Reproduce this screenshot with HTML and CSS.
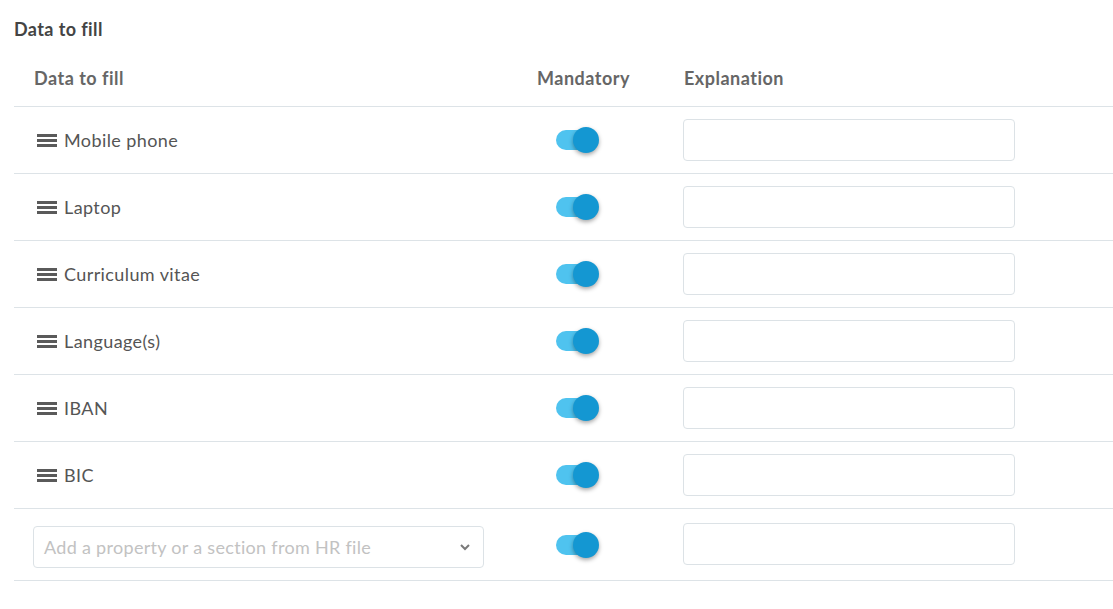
FILE: index.html
```html
<!DOCTYPE html>
<html>
<head>
<meta charset="utf-8">
<link rel="stylesheet" href="styles.css">
</head>
<body>
<div class="page">
  <h2 class="title">Data to fill</h2>
  <div class="table">
    <div class="row head">
      <div class="c1">Data to fill</div>
      <div class="c2">Mandatory</div>
      <div class="c3">Explanation</div>
    </div>
    <div class="row">
      <div class="c1"><span class="grip"><i></i><i></i><i></i></span>Mobile phone</div>
      <div class="c2"><span class="toggle"><span class="knob"></span></span></div>
      <div class="c3"><span class="input"></span></div>
    </div>
    <div class="row">
      <div class="c1"><span class="grip"><i></i><i></i><i></i></span>Laptop</div>
      <div class="c2"><span class="toggle"><span class="knob"></span></span></div>
      <div class="c3"><span class="input"></span></div>
    </div>
    <div class="row">
      <div class="c1"><span class="grip"><i></i><i></i><i></i></span>Curriculum vitae</div>
      <div class="c2"><span class="toggle"><span class="knob"></span></span></div>
      <div class="c3"><span class="input"></span></div>
    </div>
    <div class="row">
      <div class="c1"><span class="grip"><i></i><i></i><i></i></span>Language(s)</div>
      <div class="c2"><span class="toggle"><span class="knob"></span></span></div>
      <div class="c3"><span class="input"></span></div>
    </div>
    <div class="row">
      <div class="c1"><span class="grip"><i></i><i></i><i></i></span>IBAN</div>
      <div class="c2"><span class="toggle"><span class="knob"></span></span></div>
      <div class="c3"><span class="input"></span></div>
    </div>
    <div class="row">
      <div class="c1"><span class="grip"><i></i><i></i><i></i></span>BIC</div>
      <div class="c2"><span class="toggle"><span class="knob"></span></span></div>
      <div class="c3"><span class="input"></span></div>
    </div>
    <div class="row last">
      <div class="c1 sel-cell">
        <div class="select">
          <span class="placeholder">Add a property or a section from HR file</span>
          <svg class="chev" width="12" height="8" viewBox="0 0 12 8"><path d="M2 2l4 4 4-4" fill="none" stroke="#7a7a7a" stroke-width="2"/></svg>
        </div>
      </div>
      <div class="c2"><span class="toggle"><span class="knob"></span></span></div>
      <div class="c3"><span class="input"></span></div>
    </div>
  </div>
</div>
</body>
</html>
```
FILE: styles.css
```css
html, body {
  margin: 0;
  padding: 0;
  background: #fff;
}
body {
  font-family: Lato, "Liberation Sans", sans-serif;
  color: #555;
}
.page {
  padding: 17px 0 0 14px;
}
.title {
  margin: 0;
  font-size: 18px;
  line-height: 24px;
  font-weight: 700;
  letter-spacing: 0.4px;
  color: #444;
}
.table {
  margin-top: 9px;
}
.row {
  display: grid;
  grid-template-columns: 523px 146px 1fr;
  align-items: center;
  height: 66px;
  border-bottom: 1px solid #dde3e7;
  font-size: 18px;
  letter-spacing: 0.4px;
}
.row.head {
  height: 56px;
  font-size: 18px;
  font-weight: 700;
  letter-spacing: 0.5px;
  color: #666;
}
.row.last {
  height: 71px;
}
.c1 {
  padding-left: 20px;
  display: flex;
  align-items: center;
}
.head .c3 {
  padding-left: 1px;
}
.grip {
  display: inline-flex;
  flex-direction: column;
  gap: 2px;
  width: 20px;
  margin-left: 3px;
  margin-right: 7px;
}
.grip i {
  display: block;
  height: 3px;
  background: #5a5a5a;
}
.toggle {
  display: block;
  position: relative;
  margin-left: 19px;
  width: 36px;
  height: 20px;
  border-radius: 10px;
  background: #4fc3ef;
}
.knob {
  position: absolute;
  left: 17px;
  top: -3px;
  width: 26px;
  height: 26px;
  border-radius: 50%;
  background: #1497d2;
  box-shadow: 0 2px 4px rgba(0,0,0,0.35);
}
.input {
  display: block;
  width: 330px;
  height: 40px;
  border: 1px solid #dce2e6;
  border-radius: 4px;
}
.last .input {
  margin-top: -2px;
}
.sel-cell {
  padding-left: 19px;
}
.select {
  display: flex;
  align-items: center;
  justify-content: space-between;
  box-sizing: border-box;
  width: 451px;
  height: 42px;
  margin-top: 5px;
  border: 1px solid #dce2e6;
  border-radius: 4px;
  padding: 0 12px 0 10px;
}
.placeholder {
  color: #c2c2c2;
  font-size: 18px;
  letter-spacing: 0.3px;
}
.chev {
  display: block;
}
```
